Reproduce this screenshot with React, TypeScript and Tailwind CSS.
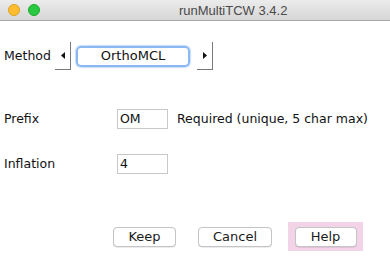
import React from 'react';

const ArrowButton: React.FC<{ dir: 'left' | 'right' }> = ({ dir }) => (
  <div className="w-[16px] h-[28px] border-r border-b border-[#7a7a7a] flex items-center justify-center">
    <svg width="4" height="7" viewBox="0 0 4 7">
      {dir === 'left' ? <polygon points="4,0 4,7 0,3.5" fill="#111" /> : <polygon points="0,0 0,7 4,3.5" fill="#111" />}
    </svg>
  </div>
);

const MacButton: React.FC<{ label: string; width: string }> = ({ label, width }) => (
  <button
    className={`${width} h-[20px] rounded-[4px] border border-[#c4c4c4] bg-white text-[13px] text-[#1a1a1a] flex items-center justify-center shadow-[0_0.5px_0.5px_rgba(0,0,0,0.15)]`}
  >
    {label}
  </button>
);

const App: React.FC = () => {
  return (
    <div className="w-[390px] h-[262px] overflow-hidden bg-white" style={{ fontFamily: '"DejaVu Sans", "Noto Sans", sans-serif' }}>
      {/* Title bar */}
      <div className="h-[21px] bg-gradient-to-b from-[#ececec] to-[#d6d6d6] border-b border-[#a8a8a8] flex items-center">
        <div className="flex items-center gap-[8px] ml-[-12px]">
          <span className="w-[12px] h-[12px] rounded-full bg-[#fe5f57] border border-[#e0443e]" />
          <span className="w-[12px] h-[12px] rounded-full bg-[#febc2e] border border-[#dea123]" />
          <span className="w-[12px] h-[12px] rounded-full bg-[#28c840] border border-[#1aab29]" />
        </div>
        <span
          className="ml-[139px] text-[13px] text-[#4a4a4a] leading-none"
          style={{ fontFamily: '"Liberation Sans", Arial, sans-serif' }}
        >
          runMultiTCW 3.4.2
        </span>
      </div>

      {/* Method row */}
      <div className="flex items-center mt-[21px] pl-[4px] h-[28px] text-[12.5px] text-[#111]">
        <span className="w-[51px]">Method</span>
        <ArrowButton dir="left" />
        <div className="ml-[5px] w-[114px] h-[21px] rounded-[5px] border-[2px] border-[#8ab8f2] shadow-[0_0_1px_1px_rgba(120,170,240,0.4)] flex items-center justify-center text-[13px]">
          OrthoMCL
        </div>
        <div className="ml-[7px]">
          <ArrowButton dir="right" />
        </div>
      </div>

      {/* Prefix row */}
      <div className="flex items-center mt-[39px] pl-[4px] h-[20px] text-[12.5px] text-[#111]">
        <span className="w-[113px]">Prefix</span>
        <div className="w-[51px] h-[20px] border border-[#c8c8c8] flex items-center pl-[2px]">OM</div>
        <span className="ml-[9px]">Required (unique, 5 char max)</span>
      </div>

      {/* Inflation row */}
      <div className="flex items-center mt-[25px] pl-[4px] h-[20px] text-[12.5px] text-[#111]">
        <span className="w-[113px]">Inflation</span>
        <div className="w-[51px] h-[20px] border border-[#c8c8c8] flex items-center pl-[2px]">4</div>
      </div>

      {/* Buttons */}
      <div className="flex items-center mt-[48px] pl-[113px]">
        <MacButton label="Keep" width="w-[63px]" />
        <div className="ml-[22px]">
          <MacButton label="Cancel" width="w-[74px]" />
        </div>
        <div className="ml-[16px] w-[75px] h-[29px] bg-[#f3d3e8] flex items-center justify-center">
          <MacButton label="Help" width="w-[62px]" />
        </div>
      </div>
    </div>
  );
};

export default App;
